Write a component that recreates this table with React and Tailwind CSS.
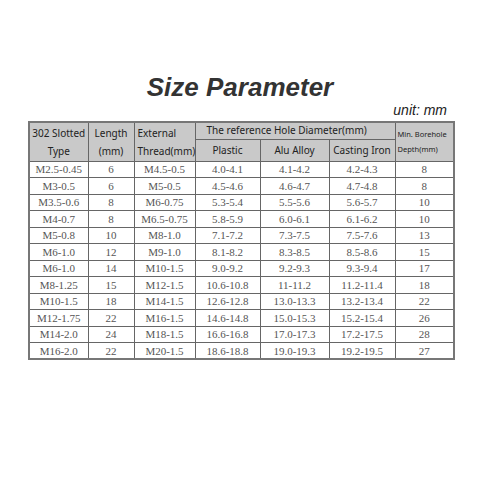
import React from "react";

const rows = [
  ["M2.5-0.45", "6", "M4.5-0.5", "4.0-4.1", "4.1-4.2", "4.2-4.3", "8"],
  ["M3-0.5", "6", "M5-0.5", "4.5-4.6", "4.6-4.7", "4.7-4.8", "8"],
  ["M3.5-0.6", "8", "M6-0.75", "5.3-5.4", "5.5-5.6", "5.6-5.7", "10"],
  ["M4-0.7", "8", "M6.5-0.75", "5.8-5.9", "6.0-6.1", "6.1-6.2", "10"],
  ["M5-0.8", "10", "M8-1.0", "7.1-7.2", "7.3-7.5", "7.5-7.6", "13"],
  ["M6-1.0", "12", "M9-1.0", "8.1-8.2", "8.3-8.5", "8.5-8.6", "15"],
  ["M6-1.0", "14", "M10-1.5", "9.0-9.2", "9.2-9.3", "9.3-9.4", "17"],
  ["M8-1.25", "15", "M12-1.5", "10.6-10.8", "11-11.2", "11.2-11.4", "18"],
  ["M10-1.5", "18", "M14-1.5", "12.6-12.8", "13.0-13.3", "13.2-13.4", "22"],
  ["M12-1.75", "22", "M16-1.5", "14.6-14.8", "15.0-15.3", "15.2-15.4", "26"],
  ["M14-2.0", "24", "M18-1.5", "16.6-16.8", "17.0-17.3", "17.2-17.5", "28"],
  ["M16-2.0", "22", "M20-1.5", "18.6-18.8", "19.0-19.3", "19.2-19.5", "27"],
];

const widths = [59, 46, 61, 65, 69, 66, 59];

export default function App() {
  const hd = "border border-[#666] bg-[#c9c9c9] text-[#222] font-normal p-0";
  return (
    <div className="w-[480px] h-[480px] bg-white overflow-hidden">
      <div
        className="pt-[72px] text-center text-[26px] leading-[30px] font-bold italic text-[#333]"
        style={{ fontFamily: '"Liberation Sans", Arial, sans-serif' }}
      >
        Size Parameter
      </div>
      <div
        className="text-right pr-[33px] text-[14px] leading-[16px] italic text-[#222]"
        style={{ fontFamily: '"Liberation Sans", Arial, sans-serif' }}
      >
        unit: mm
      </div>
      <table
        className="ml-[28px] mt-[3px] w-[425px] table-fixed border-collapse border-2 border-[#777]"
        style={{ fontFamily: '"Noto Sans", sans-serif' }}
      >
        <colgroup>
          {widths.map((w, i) => (
            <col key={i} style={{ width: w }} />
          ))}
        </colgroup>
        <thead>
          <tr className="h-[17px]">
            <th rowSpan={2} className={`${hd} text-center text-[10px] leading-[18px]`}>
              302 Slotted
              <br />
              Type
            </th>
            <th rowSpan={2} className={`${hd} text-center text-[10px] leading-[18px]`}>
              Length
              <br />
              (mm)
            </th>
            <th rowSpan={2} className={`${hd} text-left pl-[3px] text-[10px] leading-[18px] whitespace-nowrap`}>
              External
              <br />
              Thread(mm)
            </th>
            <th colSpan={3} className={`${hd} text-left pl-[11px] text-[10px] leading-[15px] whitespace-nowrap`}>
              The reference Hole Diameter(mm)
            </th>
            <th rowSpan={2} className={`${hd} text-left pl-[2px] text-[7.5px] leading-[15px] whitespace-nowrap`}>
              Min. Borehole
              <br />
              Depth(mm)
            </th>
          </tr>
          <tr className="h-[22px]">
            <th className={`${hd} text-center text-[10px] leading-[20px]`}>Plastic</th>
            <th className={`${hd} text-center text-[10px] leading-[20px]`}>Alu Alloy</th>
            <th className={`${hd} text-center text-[10px] leading-[20px] whitespace-nowrap`}>Casting Iron</th>
          </tr>
        </thead>
        <tbody style={{ fontFamily: '"Liberation Serif", "Times New Roman", serif' }}>
          {rows.map((r, i) => (
            <tr key={i} className="h-[16.5px]">
              {r.map((c, j) => (
                <td
                  key={j}
                  className="border border-[#666] p-0 text-center text-[11px] leading-[14px] text-[#555]"
                >
                  {c}
                </td>
              ))}
            </tr>
          ))}
        </tbody>
      </table>
    </div>
  );
}
